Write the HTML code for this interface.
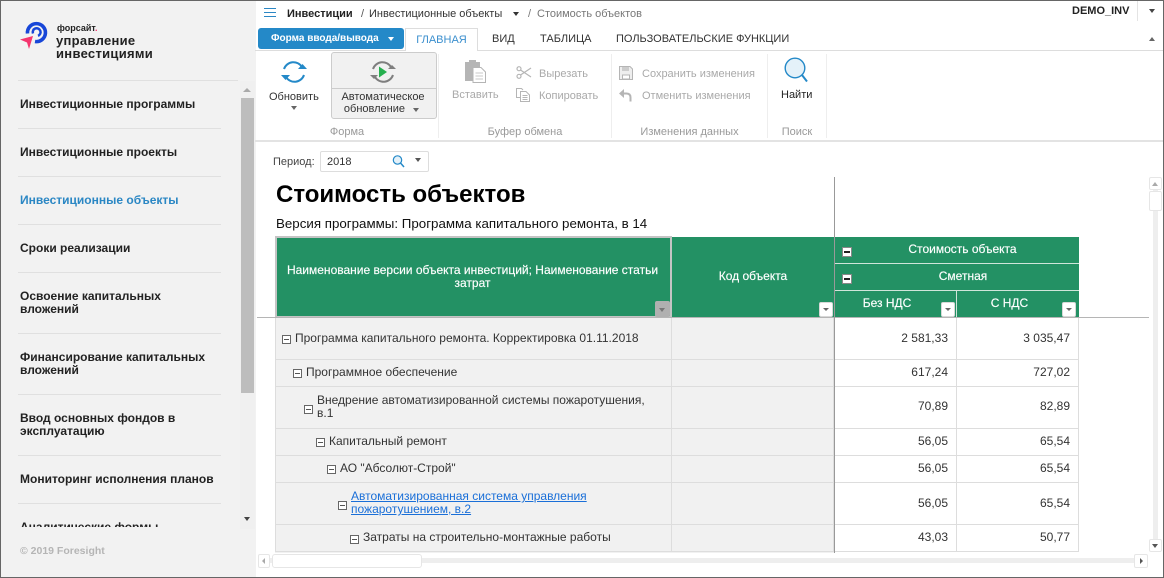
<!DOCTYPE html>
<html lang="ru"><head><meta charset="utf-8"><title>Стоимость объектов</title>
<style>
html,body{margin:0;padding:0;width:1164px;height:578px;overflow:hidden;background:#fff}
body{font-family:"Liberation Sans",sans-serif;font-size:12px;color:#333;position:relative}
.a{position:absolute;white-space:nowrap}
.box{position:absolute;box-sizing:border-box}
.nav{position:absolute;left:20px;font-weight:bold;font-size:12px;line-height:13px;color:#222}
.sep{position:absolute;left:18px;width:203px;height:1px;background:#e0e0e0}
.dis{color:#a9a9a9;font-size:11px}
.grp{color:#999;font-size:11px;text-align:center;position:absolute;top:126px}
.vs{position:absolute;top:54px;height:84px;width:1px;background:#eee}
.tri{position:absolute;width:0;height:0;border-left:3.5px solid transparent;border-right:3.5px solid transparent;border-top:4px solid #555}
.triu{position:absolute;width:0;height:0;border-left:4px solid transparent;border-right:4px solid transparent;border-bottom:4px solid #777}
.c{position:absolute;box-sizing:border-box;border-right:1px solid #ddd;border-bottom:1px solid #ddd}
.g{background:#f1f1f1;left:275px;width:397px;border-left:1px solid #ddd}
.k{background:#f1f1f1;left:672px;width:162px}
.v{font-size:12px;color:#333;text-align:right;padding-right:8px;background:#fff}
.v1{left:835px;width:122px}.v2{left:957px;width:122px}
.t{position:absolute;font-size:12px;line-height:13px;color:#333}
.m{position:absolute;box-sizing:border-box;width:9px;height:9px;border:1px solid #666;background:#fff}
.m:after{content:"";position:absolute;left:1px;top:3px;width:5px;height:1px;background:#555}
.hd{position:absolute;box-sizing:border-box;background:#239164;color:#fff;font-size:12px;text-align:center;-webkit-text-stroke:.15px #fff}
.dd{position:absolute;width:14px;height:15px;background:#fff;border-radius:2px;border:1px solid #d8d8d8;box-sizing:border-box}
.dd:after{content:"";position:absolute;left:3px;top:5px;border-left:3.5px solid transparent;border-right:3.5px solid transparent;border-top:3.5px solid #666}
.hm{position:absolute;width:8px;height:8px;background:#fff;border:1px solid #888}
.hm:after{content:"";position:absolute;left:1px;top:3px;width:6px;height:2px;background:#222}
.sb{position:absolute;box-sizing:border-box;background:#fff;border:1px solid #e6e6e6;border-radius:2px}
</style></head><body>

<!-- sidebar -->
<div class="box" style="left:0;top:0;width:256px;height:578px;background:#f2f2f2"></div>
<svg class="a" style="left:18px;top:18px" width="34" height="34" viewBox="0 0 34 34" fill="none">
<path d="M9.500 15.500 A9 9 0 1 1 17 23.500" stroke="#1746d8" stroke-width="3.600"/>
<path d="M15 15.500 A3.900 3.900 0 1 1 20 17.800" stroke="#1746d8" stroke-width="2.500"/>
<path d="M2 21.500 L15 18 L11 31 L9 24.500 Z" fill="#f5356f"/>
</svg>
<div class="a" style="left:57px;top:23px;font-size:9px;font-weight:bold;color:#222">форсайт<span style="color:#f5356f">.</span></div>
<div class="a" style="left:56px;top:34px;font-size:13px;font-weight:bold;color:#222;line-height:13px;letter-spacing:.3px">управление<br>инвестициями</div>
<div class="sep" style="top:80px;width:220px"></div>

<div class="box" style="left:240px;top:81px;width:15px;height:448px;background:#f0f0f0"></div>
<div class="box" style="left:241px;top:98px;width:13px;height:295px;background:#bdbdbd"></div>
<div class="triu" style="left:243px;top:88px;border-bottom-color:#aaa"></div>
<div class="tri" style="left:244px;top:517px;border-top-color:#444"></div>

<div class="nav" style="top:98px">Инвестиционные программы</div>
<div class="sep" style="top:128px"></div>
<div class="nav" style="top:146px">Инвестиционные проекты</div>
<div class="sep" style="top:176px"></div>
<div class="nav" style="top:194px;color:#2b87c4">Инвестиционные объекты</div>
<div class="sep" style="top:224px"></div>
<div class="nav" style="top:242px">Сроки реализации</div>
<div class="sep" style="top:272px"></div>
<div class="nav" style="top:290px">Освоение капитальных<br>вложений</div>
<div class="sep" style="top:333px"></div>
<div class="nav" style="top:351px">Финансирование капитальных<br>вложений</div>
<div class="sep" style="top:394px"></div>
<div class="nav" style="top:412px">Ввод основных фондов в<br>эксплуатацию</div>
<div class="sep" style="top:455px"></div>
<div class="nav" style="top:473px">Мониторинг исполнения планов</div>
<div class="sep" style="top:503px"></div>
<div style="position:absolute;left:20px;top:521px;width:200px;height:6px;overflow:hidden"><div class="nav" style="left:0;top:0;white-space:nowrap">Аналитические формы</div></div>
<div class="a" style="left:20px;top:545px;font-size:10.5px;font-weight:bold;color:#b5b5b5">© 2019 Foresight</div>

<!-- top breadcrumb -->
<svg class="a" style="left:264px;top:8px" width="12" height="9"><path d="M0 .5H12M0 4.500H12M0 8.500H12" stroke="#2b87c4" stroke-width="1"/></svg>
<div class="a" style="left:287px;top:8px;font-weight:bold;font-size:11px;color:#222">Инвестиции</div>
<div class="a" style="left:361px;top:8px;font-size:11px;color:#555">/</div>
<div class="a" style="left:369px;top:8px;font-size:11px;color:#333">Инвестиционные объекты</div>
<div class="tri" style="left:513px;top:12px;border-top-color:#333"></div>
<div class="a" style="left:528px;top:8px;font-size:11px;color:#777">/</div>
<div class="a" style="left:537px;top:8px;font-size:11px;color:#777">Стоимость объектов</div>
<div class="a" style="left:1072px;top:5px;font-weight:bold;font-size:11px;color:#222">DEMO_INV</div>
<div class="box" style="left:1137px;top:0;width:1px;height:21px;background:#e4e4e4"></div>
<div class="tri" style="left:1149px;top:9px;border-top-color:#444"></div>

<!-- ribbon tabs -->
<div class="box" style="left:258px;top:28px;width:146px;height:21px;background:#2489c8;border-radius:3px;color:#fff;font-weight:bold;font-size:10px;line-height:22px;padding-left:13px">Форма ввода/вывода</div>
<div class="tri" style="left:388px;top:37px;border-top-color:#fff"></div>
<div class="box" style="left:255px;top:50px;width:908px;height:1px;background:#ddd"></div>
<div class="box" style="left:405px;top:28px;width:73px;height:23px;background:#fff;border:1px solid #ddd;border-bottom:0;color:#3b8fce;font-size:11px;line-height:23px;text-align:center">ГЛАВНАЯ</div>
<div class="a" style="left:492px;top:33px;font-size:11px;color:#333">ВИД</div>
<div class="a" style="left:540px;top:33px;font-size:11px;color:#333">ТАБЛИЦА</div>
<div class="a" style="left:616px;top:33px;font-size:11px;color:#333">ПОЛЬЗОВАТЕЛЬСКИЕ ФУНКЦИИ</div>
<div class="triu" style="left:1149px;top:37px;border-left-width:3.5px;border-right-width:3.5px;border-bottom-color:#666"></div>

<!-- ribbon body -->
<svg class="a" style="left:280px;top:59px" width="28" height="26" viewBox="0 0 28 26" fill="none">
<path d="M4 10 A10 10 0 0 1 22 8" stroke="#2489c8" stroke-width="2"/>
<path d="M24 16 A10 10 0 0 1 6 18" stroke="#2489c8" stroke-width="2"/>
<path d="M18 10H27L22.500 5Z M1 16H10L5.500 21Z" fill="#2489c8"/>
</svg>
<div class="a" style="left:269px;top:91px;font-size:11px;color:#333">Обновить</div>
<div class="tri" style="left:291px;top:106px;border-top-color:#666"></div>

<div class="box" style="left:331px;top:52px;width:106px;height:67px;background:#f1f1f1;border:1px solid #ccc;border-radius:3px"></div>
<div class="box" style="left:332px;top:88px;width:104px;height:1px;background:#ccc"></div>
<svg class="a" style="left:369px;top:59px" width="28" height="26" viewBox="0 0 28 26" fill="none">
<path d="M4 10 A10 10 0 0 1 22 8" stroke="#7f7f7f" stroke-width="2"/>
<path d="M24 16 A10 10 0 0 1 6 18" stroke="#7f7f7f" stroke-width="2"/>
<path d="M19 10H27L23 6Z M1 16H9L5 20Z" fill="#7f7f7f"/>
<path d="M10 7.500L18 13L10 18.500Z" fill="#26b04f"/>
</svg>
<div class="a" style="left:331px;top:91px;width:104px;text-align:center;font-size:11px;line-height:12px;color:#333;white-space:normal">Автоматическое<br>обновление <span style="display:inline-block;width:14px"></span></div>
<div class="tri" style="left:413px;top:108px;border-top-color:#666"></div>
<div class="grp" style="left:258px;width:178px">Форма</div>
<div class="vs" style="left:438px"></div>

<svg class="a" style="left:465px;top:60px" width="21" height="23" viewBox="0 0 21 23">
<path d="M0 2H4V0H11V2H15V21H0Z" fill="#b5b5b5"/>
<path d="M8 7.500H16L20.500 12V22.500H8Z" fill="#fff" stroke="#b5b5b5"/>
<path d="M10.500 13H18M10.500 16H18M10.500 19H18" stroke="#c8c8c8"/>
</svg>
<div class="a dis" style="left:452px;top:89px">Вставить</div>
<svg class="a" style="left:516px;top:66px" width="16" height="13" viewBox="0 0 16 13" fill="none" stroke="#b5b5b5" stroke-width="1.200">
<circle cx="3" cy="2.700" r="2"/><circle cx="3" cy="10.300" r="2"/><path d="M4.500 4L15 11M4.500 9L15 2"/>
</svg>
<div class="a dis" style="left:539px;top:68px">Вырезать</div>
<svg class="a" style="left:516px;top:88px" width="14" height="14" viewBox="0 0 14 14" fill="none" stroke="#b5b5b5">
<path d="M4 9.500H.5V.5H5.500L7 2"/><path d="M4.500 3.500H10L13.500 7V13.500H4.500Z" fill="#fff"/><path d="M6.500 7.500H11.500M6.500 9.500H11.500M6.500 11.500H11.500"/>
</svg>
<div class="a dis" style="left:539px;top:90px">Копировать</div>
<div class="grp" style="left:439px;width:172px">Буфер обмена</div>
<div class="vs" style="left:611px"></div>

<svg class="a" style="left:619px;top:66px" width="14" height="14" viewBox="0 0 14 14">
<path d="M.5 .5H11L13.500 3V13.500H.5Z" fill="#eee" stroke="#b5b5b5"/><path d="M3 1H10V5H3Z" fill="#ccc"/><path d="M3.500 9H10.500V13H3.500Z" fill="#fff" stroke="#b5b5b5"/>
</svg>
<div class="a dis" style="left:642px;top:68px">Сохранить изменения</div>
<svg class="a" style="left:619px;top:89px" width="13" height="13" viewBox="0 0 13 13" fill="none">
<path d="M0 4.500L5 0V9Z" fill="#b5b5b5"/><path d="M4 4.500H7.500Q11.500 4.500 11.500 8.500V12.500" stroke="#b5b5b5" stroke-width="2"/>
</svg>
<div class="a dis" style="left:642px;top:90px">Отменить изменения</div>
<div class="grp" style="left:612px;width:155px">Изменения данных</div>
<div class="vs" style="left:767px"></div>

<svg class="a" style="left:783px;top:57px" width="25" height="26" viewBox="0 0 25 26" fill="none">
<circle cx="12" cy="11" r="9.800" fill="#e4f1f9" stroke="#2489c8" stroke-width="1.400"/><path d="M19 18L24 24.500" stroke="#2489c8" stroke-width="2"/>
</svg>
<div class="a" style="left:781px;top:89px;font-size:11px;color:#222">Найти</div>
<div class="grp" style="left:768px;width:58px">Поиск</div>
<div class="vs" style="left:826px"></div>
<div class="box" style="left:255px;top:140px;width:908px;height:2px;background:#e3e3e3"></div>

<!-- period -->
<div class="a" style="left:273px;top:156px;font-size:11px;color:#444">Период:</div>
<div class="box" style="left:320px;top:151px;width:109px;height:21px;border:1px solid #ddd;border-radius:2px"></div>
<div class="a" style="left:327px;top:156px;font-size:11px;color:#333">2018</div>
<svg class="a" style="left:392px;top:155px" width="13" height="13" viewBox="0 0 13 13" fill="none"><circle cx="5.500" cy="5" r="4.200" fill="#e4f1f9" stroke="#2489c8" stroke-width="1.200"/><path d="M8.500 8L12 12" stroke="#2489c8" stroke-width="1.500"/></svg>
<div class="tri" style="left:415px;top:158px;border-top-color:#555"></div>

<!-- heading -->
<div class="a" style="left:276px;top:181px;font-size:24px;font-weight:bold;color:#000">Стоимость объектов</div>
<div class="a" style="left:276px;top:216px;font-size:13.33px;color:#111">Версия программы: Программа капитального ремонта, в 14</div>

<!-- table header -->
<div class="hd" style="left:275px;top:236px;width:397px;height:82px;border:2px solid #c4c4c4;line-height:13px;padding:26px 9px 0 7px">Наименование версии объекта инвестиций; Наименование статьи затрат</div>
<div class="box" style="left:655px;top:301px;width:15px;height:16px;background:#b0b0b0;border-radius:2px"></div>
<div class="tri" style="left:659px;top:308px;border-top-color:#777"></div>
<div class="hd" style="left:672px;top:237px;width:162px;height:80px;line-height:78px">Код объекта</div>
<div class="dd" style="left:819px;top:302px"></div>
<div class="hd" style="left:835px;top:237px;width:244px;height:26px;line-height:24px;padding-left:11px">Стоимость объекта</div>
<div class="box" style="left:835px;top:263px;width:244px;height:1px;background:#cfe5da"></div>
<div class="hd" style="left:835px;top:264px;width:244px;height:26px;line-height:24px;padding-left:12px">Сметная</div>
<div class="box" style="left:835px;top:290px;width:244px;height:1px;background:#cfe5da"></div>
<div class="hd" style="left:835px;top:291px;width:121px;height:26px;line-height:24px;padding-right:17px">Без НДС</div>
<div class="box" style="left:956px;top:291px;width:1px;height:26px;background:#cfe5da"></div>
<div class="hd" style="left:957px;top:291px;width:122px;height:26px;line-height:24px;padding-right:17px">С НДС</div>
<div class="hm" style="left:842px;top:247px"></div>
<div class="hm" style="left:842px;top:274px"></div>
<div class="dd" style="left:941px;top:302px"></div>
<div class="dd" style="left:1062px;top:302px"></div>
<div class="box" style="left:257px;top:317px;width:892px;height:1px;background:#b5b5b5"></div>

<!-- rows -->
<div class="c g" style="top:318px;height:42px"></div><div class="c k" style="top:318px;height:42px"></div>
<div class="c v v1" style="top:318px;height:42px;line-height:40px">2 581,33</div><div class="c v v2" style="top:318px;height:42px;line-height:40px">3 035,47</div>
<div class="c g" style="top:360px;height:27px"></div><div class="c k" style="top:360px;height:27px"></div>
<div class="c v v1" style="top:360px;height:27px;line-height:25px">617,24</div><div class="c v v2" style="top:360px;height:27px;line-height:25px">727,02</div>
<div class="c g" style="top:387px;height:42px"></div><div class="c k" style="top:387px;height:42px"></div>
<div class="c v v1" style="top:387px;height:42px;line-height:38px">70,89</div><div class="c v v2" style="top:387px;height:42px;line-height:38px">82,89</div>
<div class="c g" style="top:429px;height:27px"></div><div class="c k" style="top:429px;height:27px"></div>
<div class="c v v1" style="top:429px;height:27px;line-height:25px">56,05</div><div class="c v v2" style="top:429px;height:27px;line-height:25px">65,54</div>
<div class="c g" style="top:456px;height:27px"></div><div class="c k" style="top:456px;height:27px"></div>
<div class="c v v1" style="top:456px;height:27px;line-height:25px">56,05</div><div class="c v v2" style="top:456px;height:27px;line-height:25px">65,54</div>
<div class="c g" style="top:483px;height:42px"></div><div class="c k" style="top:483px;height:42px"></div>
<div class="c v v1" style="top:483px;height:42px;line-height:40px">56,05</div><div class="c v v2" style="top:483px;height:42px;line-height:40px">65,54</div>
<div class="c g" style="top:525px;height:27px"></div><div class="c k" style="top:525px;height:27px"></div>
<div class="c v v1" style="top:525px;height:27px;line-height:25px">43,03</div><div class="c v v2" style="top:525px;height:27px;line-height:25px">50,77</div>
<div class="box" style="left:275px;top:552px;width:559px;height:1px;background:#f1f1f1"></div>
<div class="box" style="left:834px;top:177px;width:1px;height:376px;background:#999"></div>

<div class="m" style="left:282px;top:335px"></div><div class="t" style="left:295px;top:332px;white-space:nowrap">Программа капитального ремонта. Корректировка 01.11.2018</div>
<div class="m" style="left:293px;top:369px"></div><div class="t" style="left:306px;top:366px;white-space:nowrap">Программное обеспечение</div>
<div class="m" style="left:304px;top:405px"></div><div class="t" style="left:317px;top:394px;white-space:nowrap">Внедрение автоматизированной системы пожаротушения,<br>в.1</div>
<div class="m" style="left:316px;top:438px"></div><div class="t" style="left:329px;top:435px;white-space:nowrap">Капитальный ремонт</div>
<div class="m" style="left:327px;top:465px"></div><div class="t" style="left:340px;top:462px;white-space:nowrap">АО "Абсолют-Строй"</div>
<div class="m" style="left:338px;top:501px"></div><div class="t" style="left:351px;top:490px;white-space:nowrap;color:#1a6fd8;text-decoration:underline">Автоматизированная система управления<br>пожаротушением, в.2</div>
<div class="m" style="left:350px;top:535px"></div><div class="t" style="left:363px;top:531px;white-space:nowrap">Затраты на строительно-монтажные работы</div>

<!-- scrollbars -->
<div class="box" style="left:1153px;top:190px;width:5px;height:350px;background:#eee"></div>
<div class="sb" style="left:1149px;top:177px;width:13px;height:13px"></div>
<div class="triu" style="left:1152px;top:182px;border-left-width:3.5px;border-right-width:3.5px;border-bottom-color:#aaa"></div>
<div class="sb" style="left:1149px;top:191px;width:13px;height:20px"></div>
<div class="sb" style="left:1149px;top:539px;width:13px;height:13px"></div>
<div class="tri" style="left:1152px;top:544px;border-top-color:#555"></div>
<div class="box" style="left:270px;top:558px;width:865px;height:5px;background:#eee"></div>
<div class="sb" style="left:258px;top:554px;width:12px;height:14px"></div>
<div class="a" style="left:262px;top:558px;width:0;height:0;border-top:3px solid transparent;border-bottom:3px solid transparent;border-right:3px solid #aaa"></div>
<div class="sb" style="left:272px;top:554px;width:150px;height:14px;border-radius:3px"></div>
<div class="sb" style="left:1134px;top:554px;width:14px;height:14px"></div>
<div class="a" style="left:1140px;top:558px;width:0;height:0;border-top:3px solid transparent;border-bottom:3px solid transparent;border-left:3px solid #555"></div>

<!-- window frame -->
<div class="box" style="left:0;top:0;width:1164px;height:578px;border:1px solid #666;pointer-events:none"></div>
</body></html>
